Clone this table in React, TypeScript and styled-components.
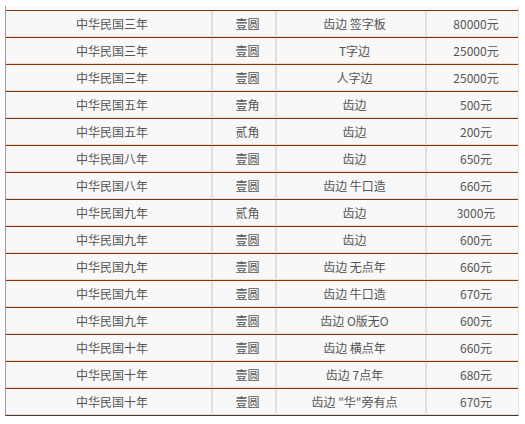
import React from "react";
import styled, { createGlobalStyle } from "styled-components";

const GlobalStyle = createGlobalStyle`
  html, body {
    margin: 0;
    padding: 0;
    background: #ffffff;
  }
`;

type Coin = {
  year: string;
  value: string;
  note: string;
  price: string;
};

const rows: Coin[] = [
  { year: "中华民国三年", value: "壹圆", note: "齿边 签字板", price: "80000元" },
  { year: "中华民国三年", value: "壹圆", note: "T字边", price: "25000元" },
  { year: "中华民国三年", value: "壹圆", note: "人字边", price: "25000元" },
  { year: "中华民国五年", value: "壹角", note: "齿边", price: "500元" },
  { year: "中华民国五年", value: "贰角", note: "齿边", price: "200元" },
  { year: "中华民国八年", value: "壹圆", note: "齿边", price: "650元" },
  { year: "中华民国八年", value: "壹圆", note: "齿边 牛口造", price: "660元" },
  { year: "中华民国九年", value: "贰角", note: "齿边", price: "3000元" },
  { year: "中华民国九年", value: "壹圆", note: "齿边", price: "600元" },
  { year: "中华民国九年", value: "壹圆", note: "齿边 无点年", price: "660元" },
  { year: "中华民国九年", value: "壹圆", note: "齿边 牛口造", price: "670元" },
  { year: "中华民国九年", value: "壹圆", note: "齿边 O版无O", price: "600元" },
  { year: "中华民国十年", value: "壹圆", note: "齿边 横点年", price: "660元" },
  { year: "中华民国十年", value: "壹圆", note: "齿边 7点年", price: "680元" },
  { year: "中华民国十年", value: "壹圆", note: "齿边 \"华\"旁有点", price: "670元" },
];

const Table = styled.div`
  margin: 6px 0 0 5px;
  width: 512px;
  padding-top: 4px;
  background: #fafafa;
  border-left: 1px solid #9c9c9c;
  border-right: 1px solid #e2e2e2;
  border-bottom: 1px solid #3a3a3a;
  font-family: "Noto Sans CJK SC", "Noto Sans", sans-serif;
  font-size: 12px;
  color: #555555;
`;

const Row = styled.div`
  display: grid;
  grid-template-columns: 207px 64px 150px 1fr;
  border-top: 1px solid #7a3815;
  box-shadow: inset 0 -1px 0 #f7d9c6;
  background: #f8f8f8;
`;

const Cell = styled.div<{ $last?: boolean }>`
  height: 26px;
  line-height: 26px;
  text-align: center;
  padding-left: 7px;
  box-sizing: border-box;
  white-space: nowrap;
  border-right: ${(p) => (p.$last ? "none" : "2px solid #e0e0e0")};
`;

export default function App() {
  return (
    <>
      <GlobalStyle />
      <Table>
        {rows.map((r, i) => (
          <Row key={i}>
            <Cell>{r.year}</Cell>
            <Cell>{r.value}</Cell>
            <Cell>{r.note}</Cell>
            <Cell $last>{r.price}</Cell>
          </Row>
        ))}
      </Table>
    </>
  );
}
